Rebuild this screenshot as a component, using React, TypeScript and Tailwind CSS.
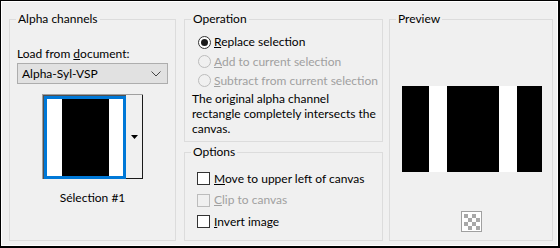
import React from 'react';

const font = { fontFamily: 'Lato, "Noto Sans", "Liberation Sans", sans-serif' };

function Radio({ checked, disabled }: { checked?: boolean; disabled?: boolean }) {
  return (
    <span
      className={`flex h-[13px] w-[13px] shrink-0 items-center justify-center rounded-full border ${
        disabled ? 'border-[#bcbcbc] bg-[#f0f0f0]' : 'border-[#333333] bg-white'
      }`}
    >
      {checked && <span className="h-[7px] w-[7px] rounded-full bg-[#1a1a1a]" />}
    </span>
  );
}

function Check({ disabled }: { disabled?: boolean }) {
  return (
    <span
      className={`block h-[13px] w-[13px] shrink-0 border ${
        disabled ? 'border-[#bcbcbc] bg-[#f0f0f0]' : 'border-[#333333] bg-white'
      }`}
    />
  );
}

function Group({ title, className, children }: { title: string; className?: string; children?: React.ReactNode }) {
  return (
    <fieldset className={`border border-[#dcdcdc] ${className ?? ''}`}>
      <legend className="ml-[6px] px-[2px] text-[12px] leading-[16px] text-black">{title}</legend>
      {children}
    </fieldset>
  );
}

export default function App() {
  return (
    <div className="h-[248px] w-[560px] bg-black pb-[2px] pl-[1px] pr-[2px] pt-[1px]" style={font}>
      <div className="h-full w-full border border-white bg-[#f0f0f0]">
        <div className="flex whitespace-nowrap pl-[7px] pt-[9px] text-[12px] text-black">
          <Group title="Alpha channels" className="flex h-[230px] w-[167px] flex-col items-center">
            <div className="mt-[19px] flex w-full flex-col px-[7px]">
              <span className="leading-[16px]">
                Load from <u>d</u>ocument:
              </span>
              <div className="mt-[1px] flex h-[21px] items-center justify-between border border-[#adadad] bg-[#e1e1e1] pl-[4px] pr-[6px]">
                <span>Alpha-Syl-VSP</span>
                <svg width="10" height="6" viewBox="0 0 10 6">
                  <polyline points="0.5,0.5 5,5 9.5,0.5" fill="none" stroke="#444" strokeWidth="1" />
                </svg>
              </div>
            </div>
            <div className="mt-[10px] flex border-l border-t border-[#a0a0a0]">
              <div className="border-l border-t border-[#505050]">
                <div className="flex h-[83px] w-[82px] border-[3px] border-[#0078d7]">
                  <div className="w-[15px] bg-white" />
                  <div className="w-[47px] bg-black" />
                  <div className="flex-1 bg-white" />
                </div>
              </div>
              <div className="flex w-[17px] items-center justify-center border-b border-r border-[#1a1a1a]">
                <svg width="7" height="4" viewBox="0 0 7 4">
                  <polygon points="0,0 7,0 3.5,4" fill="#000" />
                </svg>
              </div>
            </div>
            <span className="mt-[11px] leading-[16px]">Sélection #1</span>
          </Group>

          <div className="ml-[8px] flex w-[199px] flex-col">
            <Group title="Operation" className="h-[131px]">
              <div className="mt-[5px] flex flex-col pl-[13px]">
                <label className="flex h-[20px] items-center gap-[3px]">
                  <Radio checked />
                  <span>
                    <u>R</u>eplace selection
                  </span>
                </label>
                <label className="flex h-[19px] items-center gap-[3px] text-[#a0a0a0]">
                  <Radio disabled />
                  <span>
                    <u>A</u>dd to current selection
                  </span>
                </label>
                <label className="flex h-[19px] items-center gap-[3px] text-[#a0a0a0]">
                  <Radio disabled />
                  <span>
                    <u>S</u>ubtract from current selection
                  </span>
                </label>
              </div>
              <p className="mt-[1px] whitespace-normal pl-[7px] pr-[4px] leading-[15px]">
                The original alpha channel
                <br />
                rectangle completely intersects the canvas.
              </p>
            </Group>
            <Group title="Options" className="mt-[2px] h-[97px]">
              <div className="mt-[8px] flex flex-col pl-[12px]">
                <label className="flex h-[21px] items-center gap-[4px]">
                  <Check />
                  <span>
                    <u>M</u>ove to upper left of canvas
                  </span>
                </label>
                <label className="flex h-[22px] items-center gap-[4px] text-[#a0a0a0]">
                  <Check disabled />
                  <span>
                    <u>C</u>lip to canvas
                  </span>
                </label>
                <label className="flex h-[21px] items-center gap-[4px]">
                  <Check />
                  <span>
                    <u>I</u>nvert image
                  </span>
                </label>
              </div>
            </Group>
          </div>

          <Group title="Preview" className="ml-[6px] flex h-[230px] w-[164px] flex-col items-center">
            <div className="mt-[59px] flex h-[86px] w-[141px] pl-px">
              <div className="w-[27px] bg-black" />
              <div className="w-[18px] bg-white" />
              <div className="w-[52px] bg-black" />
              <div className="w-[18px] bg-white" />
              <div className="flex-1 bg-black" />
            </div>
            <svg className="mt-[39px]" width="21" height="21" viewBox="0 0 21 21">
              <rect x="0.5" y="0.5" width="20" height="20" fill="#fff" stroke="#a0a0a0" />
              {[0, 1, 2, 3].flatMap((r) =>
                [0, 1, 2, 3].map((c) =>
                  (r + c) % 2 === 0 ? (
                    <rect key={`${r}-${c}`} x={3 + c * 4} y={3 + r * 4} width="4" height="4" fill="#a8a8a8" />
                  ) : null
                )
              )}
            </svg>
          </Group>
        </div>
      </div>
    </div>
  );
}
